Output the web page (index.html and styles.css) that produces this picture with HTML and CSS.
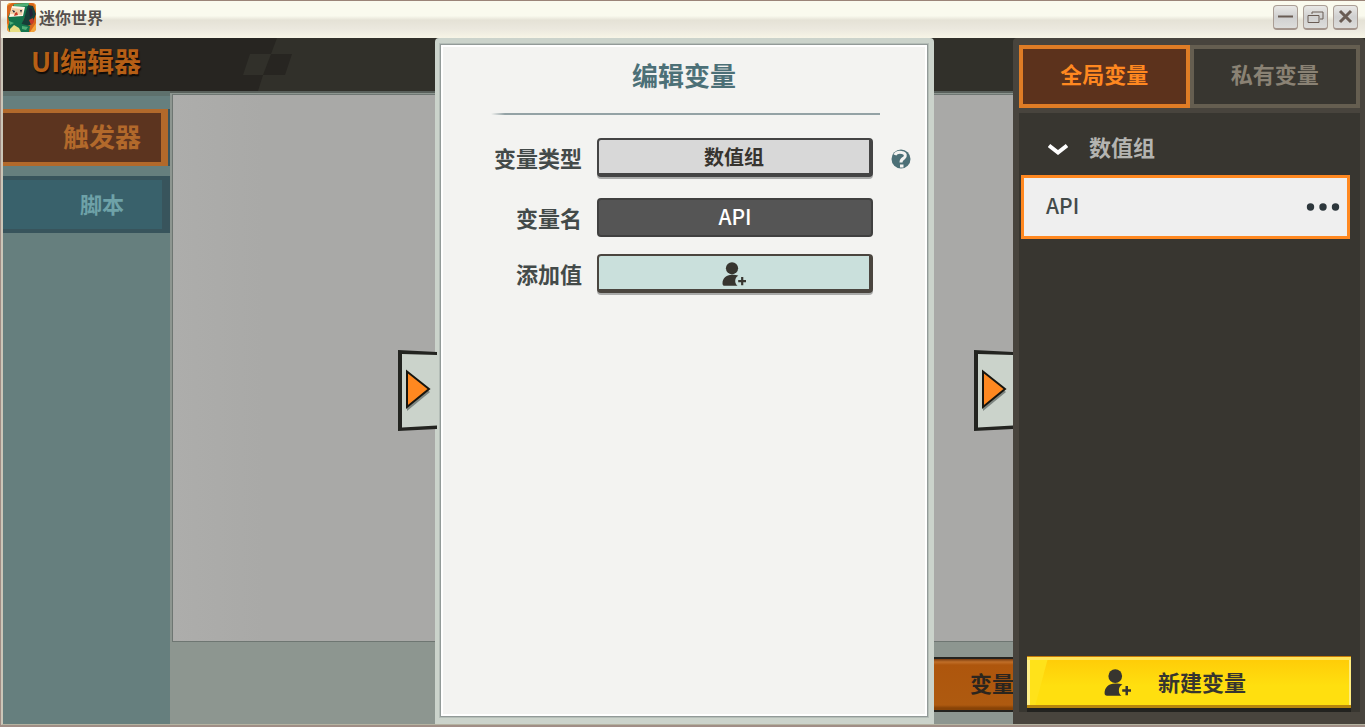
FILE: index.html
```html
<!DOCTYPE html>
<html lang="zh-CN">
<head>
<meta charset="utf-8">
<title>迷你世界</title>
<link rel="stylesheet" href="styles.css">
</head>
<body>
<svg class="defs" aria-hidden="true">
  <symbol id="user-add" viewBox="0 0 24 24">
    <circle cx="10" cy="6.3" r="6.1"/>
    <path d="M10 12.8c-6 0-9.500 3.600-9.500 8.600 0 1.600.8 2.400 2.200 2.400h12.800c-1.600-1.200-2.300-2.900-2.300-4.700 0-2.400 1.200-4.400 3.200-5.300-1.800-.7-4-1-6.400-1z"/>
    <path d="M19.100 15h2.200v3.100h2.700v2.100h-2.700v3.100h-2.200v-3.100h-2.900v-2.100h2.900z"/>
  </symbol>
  <symbol id="edge-tab" viewBox="0 0 39 82">
    <path class="tab-face" d="M2 2L39 4.500V77.500L2 79z"/>
    <path class="tab-edge" d="M0 0L39 2V5L4 4V77.500L39 75.500V79L0 81z"/>
    <path class="tab-shadow" d="M9 24V61L32 42z"/>
    <path class="tab-arrow" d="M9 21.500V57L31 39z"/>
  </symbol>
</svg>
<div class="window">
  <header class="titlebar">
    <svg class="app-icon" viewBox="0 0 29 29" aria-hidden="true">
      <defs><clipPath id="icon-clip"><rect width="29" height="29" rx="4"/></clipPath></defs>
      <g clip-path="url(#icon-clip)">
        <path class="ai-bg" d="M0 0h29v29H0z"/>
        <path class="ai-glow" d="M0 3l5-3H0zM27 0l2 8V0zM0 20l5 9H0zM23 29l6-9v9z"/>
        <path class="ai-green" d="M1 14L7 1l14-1 1 4-5 12-2 6-13-4z"/>
        <path class="ai-dark" d="M21 2l5 1 3 8-4 10-7 3-4-2 3-6z"/>
        <path class="ai-light" d="M7 1l15-1-1 3-14 1z"/>
        <path class="ai-teeth" d="M5 3l13 1-2 9-14 1z"/>
        <path class="ai-face" d="M5 5l11 1-1 6-12-1z"/>
        <path class="ai-eye" d="M5 7l3 1-1 2zM13 7l2 0-1 3zM22 5l3 1 1 6-3 3z"/>
        <path class="ai-mouth" d="M8 10l2-1 1 3-4 1zM22 17l4-2 1 4-3 3z"/>
        <path class="ai-green" d="M3 17l12 4 8 2-1 6H3l-2-5z"/>
        <path class="ai-belly" d="M3 26l4-4 5 3 2 4H3z"/>
        <path class="ai-light" d="M15 23l6 1-2 3-4-1zM2 18l5 2-4 2z"/>
      </g>
    </svg>
    <span class="app-name">迷你世界</span>
    <div class="window-controls">
      <button class="win-btn" aria-label="最小化"><svg viewBox="0 0 23 22"><path d="M4 10.500h15"/></svg></button>
      <button class="win-btn" aria-label="还原"><svg class="thin" viewBox="0 0 23 22"><path d="M4 9.500h11v7H4zM8 8V6h11v7h-3"/></svg></button>
      <button class="win-btn" aria-label="关闭"><svg class="bold" viewBox="0 0 23 22"><path d="M6 5l11 11M17 5L6 16"/></svg></button>
    </div>
  </header>

  <div class="editor">
    <header class="editor-header">
      <h1>UI编辑器</h1>
      <svg class="checker" viewBox="0 0 60 53" aria-hidden="true">
        <path class="ck-light" d="M34 0H60V53H15L20 37H0L7 16H28z"/>
        <path class="ck-dark" d="M28 16H49L42 37H20z"/>
      </svg>
    </header>
    <div class="editor-body">
      <nav class="sidebar">
        <a class="side-item active" href="#trigger">触发器</a>
        <a class="side-item" href="#script">脚本</a>
      </nav>
      <main class="stage">
        <div class="canvas"></div>
        <footer class="stage-footer">
          <button class="variable-btn">变量</button>
        </footer>
        <button class="edge-tab tab-left" aria-label="展开"><svg viewBox="0 0 39 82"><use href="#edge-tab"/></svg></button>
        <button class="edge-tab tab-right" aria-label="展开"><svg viewBox="0 0 39 82"><use href="#edge-tab"/></svg></button>
      </main>
    </div>

    <section class="drawer-edit">
      <form class="edit-card">
        <h2>编辑变量</h2>
        <div class="rule"></div>
        <div class="fields">
          <label for="var-type">变量类型</label>
          <select id="var-type" class="control raised"><option>数值组</option></select>
          <button type="button" class="help" aria-label="帮助">
            <svg viewBox="0 0 20 20"><circle cx="10" cy="10" r="9.500"/><path d="M4 6C5 3.500 8 3 11 3.500c4 .5 4 4 2 5.500C11.500 10 10 10.500 10 13.500"/><path d="M9 17h3.500"/></svg>
          </button>
          <label for="var-name">变量名</label>
          <input id="var-name" class="control dark" type="text" value="API">
          <label for="add-value">添加值</label>
          <button type="button" id="add-value" class="control raised mint"><svg><use href="#user-add"/></svg></button>
        </div>
      </form>
    </section>

    <aside class="drawer-vars">
      <div class="tabs">
        <button class="tab active">全局变量</button>
        <button class="tab">私有变量</button>
      </div>
      <div class="var-list">
        <button class="group">
          <svg viewBox="0 0 20 12" aria-hidden="true"><path d="M1 2.500l9 7 9-7"/></svg>
          <span>数值组</span>
        </button>
        <div class="var-item">
          <span>API</span>
          <button class="more" aria-label="更多"><svg viewBox="0 0 34 8"><circle cx="4.500" cy="4" r="3.700"/><circle cx="17" cy="4" r="3.700"/><circle cx="29.500" cy="4" r="3.700"/></svg></button>
        </div>
        <button class="new-var"><svg><use href="#user-add"/></svg><span>新建变量</span></button>
      </div>
    </aside>
  </div>
</div>
</body>
</html>
```
FILE: styles.css
```css
* { box-sizing: border-box; }
html, body { height: 100%; }
body {
  margin: 0;
  overflow: hidden;
  background: #9b8c83;
  font-family: "Noto Sans CJK SC", "Noto Sans", sans-serif;
  font-weight: 700;
}
button, input, select { margin: 0; padding: 0; border: 0; background: none; font: inherit; color: inherit; }
button svg { display: block; }
.defs { position: absolute; width: 0; height: 0; }

.window {
  display: flex;
  flex-direction: column;
  height: 100vh;
  border-top: 1px solid #9b8478;
  border-left: 1px solid #a08c84;
  border-bottom: 2px solid #a08e86;
}

/* Title bar */
.titlebar {
  display: flex;
  flex: 0 0 37px;
  align-items: center;
  gap: 3px;
  padding: 0 7px 4px 6px;
  background: linear-gradient(#fafaee 0, #fafaee 40%, #e5e2d6 52%, #ebe8de 75%, #f7f5e6 100%);
}
.app-icon { width: 29px; height: 29px; }
.ai-bg { fill: #d9681c; }
.ai-glow { fill: #f5a63a; }
.ai-dark { fill: #173e38; }
.ai-green { fill: #14754c; }
.ai-light { fill: #4fb077; }
.ai-teeth { fill: #fff6e6; }
.ai-face { fill: #f3cfa6; }
.ai-mouth { fill: #c93b26; }
.ai-eye { fill: #222237; }
.ai-belly { fill: #e7df83; }
.app-name { color: #55504d; font-size: 16px; line-height: 24px; padding-bottom: 2px; }
.window-controls { display: flex; gap: 5px; margin-left: auto; }
.win-btn {
  width: 25px;
  height: 25px;
  border: 1px solid #aa9e95;
  border-bottom: 2px solid #a4958c;
  border-radius: 4px;
  background: linear-gradient(#e9e8e6, #d0d0d0 50%, #dddddb);
}
.win-btn svg { width: 23px; height: 22px; fill: none; stroke: #695c54; stroke-width: 2; }
.win-btn .thin { stroke-width: 1; }
.win-btn .bold { stroke-width: 3; }

/* Editor behind the drawers */
.editor {
  position: relative;
  display: flex;
  flex: 1;
  flex-direction: column;
  min-height: 0;
  border-left: 2px solid #cbc6b8;
  border-bottom: 1px solid #b5b3a1;
  background: #8d9690;
}
.editor-header {
  display: flex;
  flex: 0 0 53px;
  padding-left: 28px;
  background: linear-gradient(to right, #272521 0, #272521 280px, #31302a 280px);
}
.editor-header h1 {
  width: 212px;
  margin: 0;
  color: #b65f16;
  font-size: 27px;
  font-weight: 700;
  line-height: 46px;
  text-shadow: 1px 2px 1px #100c08;
}
.checker { width: 60px; height: 53px; }
.ck-light { fill: #31302a; }
.ck-dark { fill: #272521; }
.editor-body { display: flex; flex: 1; min-height: 0; }
.sidebar {
  display: flex;
  flex: 0 0 167px;
  flex-direction: column;
  gap: 10px;
  padding-top: 13px;
  border-top: 5px solid #5e716d;
  background: #667f7e;
}
.side-item {
  height: 57px;
  padding-right: 38px;
  border: 4px solid #38545c;
  border-width: 4px 8px 4px 0;
  background: #39616b;
  color: #6ea2a8;
  font-size: 22px;
  line-height: 46px;
  text-align: right;
  text-decoration: none;
}
.side-item.active {
  margin-right: 2px;
  padding-right: 20px;
  border-color: #b2692b;
  border-right-width: 7px;
  background: #5c341f;
  box-shadow: 2px 0 #38545c;
  color: #b2692b;
  font-size: 26px;
}
.stage {
  position: relative;
  display: flex;
  flex: 1;
  flex-direction: column;
  padding-right: 350px;
  border-top: 2px solid #59605b;
}
.canvas {
  flex: 1;
  margin: 1px 0 0 2px;
  border: 1px solid #6e7672;
  background: linear-gradient(to right, #adadab, #a9a9a7 90px);
}
.stage-footer { display: flex; flex: 0 0 82px; padding-top: 15px; justify-content: flex-end; }
.variable-btn {
  width: 180px;
  height: 55px;
  padding: 0 1px 6px 0;
  border: 2px solid #24231f;
  border-right: 0;
  background: linear-gradient(#7a3d10 0, #c06e28 3px, #ae560d 6px, #ae5a10 46px, #884307 49px);
  color: #2b251e;
  font-size: 22px;
  text-align: right;
}
.edge-tab { position: absolute; top: 257px; width: 39px; height: 82px; }
.edge-tab svg { width: 39px; height: 82px; }
.tab-left { left: 228px; z-index: 2; }
.tab-right { right: 352px; }
.tab-face { fill: #cbd3cb; }
.tab-edge { fill: #232420; }
.tab-shadow { fill: #7d8580; }
.tab-arrow { fill: #ff8820; stroke: #17150f; stroke-width: 2; }

/* Edit drawer */
.drawer-edit {
  position: absolute;
  top: 0;
  bottom: 0;
  right: 431px;
  width: 499px;
  padding: 6px 6px 7px 5px;
  border-radius: 4px 4px 0 0;
  background: #cbd3cb;
}
.edit-card {
  height: 100%;
  padding: 0 50px;
  border: 1px solid #929a98;
  outline: 1px solid #b4bdb7;
  box-shadow: inset 0 0 0 2px #fff;
  background: #f3f3f1;
}
.edit-card h2 {
  margin: 0;
  color: #4c7077;
  font-size: 26px;
  font-weight: 700;
  line-height: 60px;
  text-align: center;
}
.rule {
  height: 2px;
  margin: 8px -3px 23px 0;
  background: linear-gradient(to right, transparent, #93a2a5 14px);
}
.fields {
  display: grid;
  grid-template-columns: 91px 276px 20px;
  grid-template-rows: 42px 38px 42px;
  gap: 18px 15px;
}
.fields label {
  grid-column: 1;
  color: #434a49;
  font-size: 22px;
  line-height: 38px;
  text-align: right;
  white-space: nowrap;
}
.control {
  width: 100%;
  height: 39px;
  grid-column: 2;
  border: 2px solid #404040;
  border-radius: 4px;
  font-size: 20px;
  text-align: center;
  text-align-last: center;
}
.raised {
  appearance: none;
  border-color: #444;
  border-width: 2px 4px 4px 2px;
  box-shadow: 0 2px #a9aaa9;
  background: #d8d8d8;
  color: #37342f;
}
.dark { padding-bottom: 4px; background: #555; color: #fff; font-size: 21px; font-weight: 500; }
.mint { border-color: #4a453f; background: #cae0dc; }
.mint svg { width: 24px; height: 24px; margin: 3px auto 0; fill: #37352f; }
.help { grid-column: 3; width: 20px; height: 20px; margin: 11px 0 0 3px; }
.help svg { width: 20px; height: 20px; }
.help circle { fill: #4c7077; }
.help path { fill: none; stroke: #f3f3f1; stroke-width: 3; }

/* Variables drawer */
.drawer-vars {
  position: absolute;
  top: 0;
  right: 0;
  bottom: 0;
  display: flex;
  flex-direction: column;
  gap: 5px;
  width: 352px;
  padding: 7px 5px 12px 6px;
  border-radius: 4px 4px 0 0;
  background: #48443d;
}
.tabs { display: flex; flex: 0 0 63px; }
.tab {
  flex: 1;
  padding-bottom: 8px;
  border: 4px solid #655e50;
  background: #383630;
  color: #8a8274;
  font-size: 22px;
  line-height: 46px;
}
.tab.active { border-color: #df7c25; background: #5c321c; color: #ff8820; }
.var-list {
  display: flex;
  flex: 1;
  flex-direction: column;
  min-height: 0;
  background: #383630;
}
.group {
  display: flex;
  flex: 0 0 62px;
  align-items: center;
  gap: 21px;
  padding: 10px 0 0 29px;
  color: #b4b4b1;
  font-size: 22px;
}
.group svg { width: 20px; height: 12px; fill: none; stroke: #fff; stroke-width: 4; }
.group span { padding-bottom: 6px; }
.var-item {
  display: flex;
  flex: 0 0 64px;
  align-items: center;
  justify-content: space-between;
  margin: 0 10px 0 2px;
  padding: 0 7px 0 22px;
  border: 3px solid #ff8820;
  background: #efefef;
  color: #434a49;
  font-size: 21px;
  font-weight: 500;
}
.var-item span { padding-bottom: 4px; }
.more svg { width: 34px; height: 8px; fill: #2d373c; }
.new-var {
  display: flex;
  flex: 0 0 52px;
  align-items: center;
  justify-content: center;
  gap: 27px;
  margin: auto 9px 4px 8px;
  padding-right: 28px;
  border-top: 1px solid #c57b08;
  border-bottom: 3px solid #b8860c;
  box-shadow: inset 0 3px #ffe55c, inset 3px 0 #fff08a, inset -2px 0 #ffed80, 0 4px #22221f;
  background:
    linear-gradient(105deg, #ffe21a 20px, transparent 21px),
    linear-gradient(#ffcb07, #ffdf0f 60%);
  color: #37352f;
  font-size: 22px;
}
.new-var svg { width: 27px; height: 27px; margin-top: 3px; fill: #37352f; }
```
